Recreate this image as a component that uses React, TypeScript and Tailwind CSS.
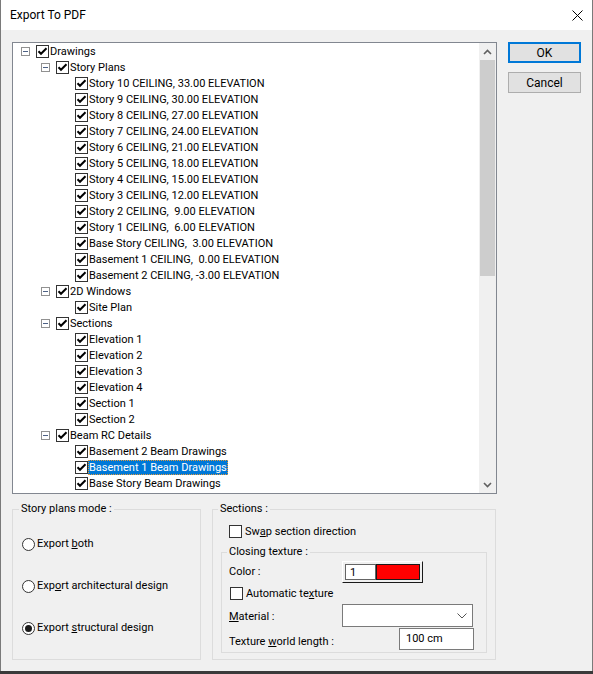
import { ReactNode } from 'react'

type Node = { label: string; level: number; expander?: boolean; selected?: boolean }

const storyLevels = [
  'Story 10 CEILING, 33.00 ELEVATION',
  'Story 9 CEILING, 30.00 ELEVATION',
  'Story 8 CEILING, 27.00 ELEVATION',
  'Story 7 CEILING, 24.00 ELEVATION',
  'Story 6 CEILING, 21.00 ELEVATION',
  'Story 5 CEILING, 18.00 ELEVATION',
  'Story 4 CEILING, 15.00 ELEVATION',
  'Story 3 CEILING, 12.00 ELEVATION',
  'Story 2 CEILING,  9.00 ELEVATION',
  'Story 1 CEILING,  6.00 ELEVATION',
  'Base Story CEILING,  3.00 ELEVATION',
  'Basement 1 CEILING,  0.00 ELEVATION',
  'Basement 2 CEILING, -3.00 ELEVATION',
]

const nodes: Node[] = [
  { label: 'Drawings', level: 0, expander: true },
  { label: 'Story Plans', level: 1, expander: true },
  ...storyLevels.map((label) => ({ label, level: 2 })),
  { label: '2D Windows', level: 1, expander: true },
  { label: 'Site Plan', level: 2 },
  { label: 'Sections', level: 1, expander: true },
  { label: 'Elevation 1', level: 2 },
  { label: 'Elevation 2', level: 2 },
  { label: 'Elevation 3', level: 2 },
  { label: 'Elevation 4', level: 2 },
  { label: 'Section 1', level: 2 },
  { label: 'Section 2', level: 2 },
  { label: 'Beam RC Details', level: 1, expander: true },
  { label: 'Basement 2 Beam Drawings', level: 2 },
  { label: 'Basement 1 Beam Drawings', level: 2, selected: true },
  { label: 'Base Story Beam Drawings', level: 2 },
]

const indent = ['ml-[8px]', 'ml-[28px]', 'ml-[47px]']

function CheckBox({ checked }: { checked?: boolean }) {
  return (
    <span className="w-[13px] h-[13px] shrink-0 border border-[#333] bg-white flex items-center justify-center">
      {checked && (
        <svg width="11" height="11" viewBox="0 0 11 11">
          <path d="M1.5 5.2 L4 7.8 L9.5 2.2" fill="none" stroke="#000" strokeWidth="2" />
        </svg>
      )}
    </span>
  )
}

function Expander() {
  return (
    <span className="w-[9px] h-[9px] border border-[#919191] bg-white flex items-center justify-center">
      <span className="w-[5px] h-px bg-[#4d6185]" />
    </span>
  )
}

function Radio({ checked }: { checked?: boolean }) {
  return (
    <span className="w-[13px] h-[13px] shrink-0 rounded-full border border-[#333] bg-white flex items-center justify-center">
      {checked && <span className="w-[7px] h-[7px] rounded-full bg-[#1a1a1a]" />}
    </span>
  )
}

function TreeRow({ node }: { node: Node }) {
  return (
    <div className={`h-[16px] flex items-center ${indent[node.level]}`}>
      <span className="w-[15px] h-[16px] flex items-center">{node.expander && <Expander />}</span>
      <CheckBox checked />
      <span
        className={`h-[15px] self-end leading-[16px] px-px whitespace-pre ${
          node.selected ? 'bg-[#0078d7] text-white outline-1 outline-dotted outline-[#e59b3a] -outline-offset-1' : ''
        }`}
      >
        {node.label}
      </span>
    </div>
  )
}

function Button({ children, primary }: { children: ReactNode; primary?: boolean }) {
  return (
    <button
      className={`w-[73px] h-[21px] bg-[#e1e1e1] text-[12px] leading-none ${
        primary ? 'border-2 border-[#0078d7]' : 'border border-[#adadad]'
      }`}
    >
      {children}
    </button>
  )
}

export default function App() {
  return (
    <div className="w-[593px] h-[674px] bg-[#3a3a3a] font-['Roboto',sans-serif] text-[11px] text-black">
      <div className="h-[671px] border-x border-[#7a7a7a] bg-[#f0f0f0] flex flex-col">
        {/* title bar */}
        <div className="h-[30px] bg-white flex items-center justify-between pl-[9px] pr-[9px] shrink-0">
          <span className="text-[12px]">Export To PDF</span>
          <svg width="11" height="11" viewBox="0 0 11 11">
            <path d="M0.5 0.5 L10.5 10.5 M10.5 0.5 L0.5 10.5" stroke="#000" strokeWidth="1" />
          </svg>
        </div>

        <div className="flex pl-[11px] pt-[12px]">
          {/* drawings tree */}
          <div className="w-[485px] h-[452px] border border-[#828790] bg-white flex">
            <div className="flex-1">
              {nodes.map((n, i) => (
                <TreeRow key={i} node={n} />
              ))}
            </div>
            <div className="w-[17px] bg-[#f0f0f0] flex flex-col">
              <div className="h-[17px] flex items-center justify-center">
                <svg width="9" height="6" viewBox="0 0 9 6">
                  <path d="M1 5 L4.5 1.5 L8 5" fill="none" stroke="#606060" strokeWidth="1.6" />
                </svg>
              </div>
              <div className="mx-px h-[216px] bg-[#cdcdcd]" />
              <div className="flex-1" />
              <div className="h-[17px] flex items-center justify-center">
                <svg width="9" height="6" viewBox="0 0 9 6">
                  <path d="M1 1 L4.5 4.5 L8 1" fill="none" stroke="#606060" strokeWidth="1.6" />
                </svg>
              </div>
            </div>
          </div>

          <div className="ml-[11px] flex flex-col gap-[9px]">
            <Button primary>OK</Button>
            <Button>Cancel</Button>
          </div>
        </div>

        <div className="flex pl-[11px] mt-[6px] gap-[11px]">
          {/* story plans mode */}
          <fieldset className="w-[189px] h-[160px] border border-[#dcdcdc] pl-[6px]">
            <legend className="px-[2px] leading-[18px]">Story plans mode :</legend>
            <div className="flex flex-col gap-[26px] mt-[18px] ml-[3px]">
              <label className="h-[16px] flex items-center gap-[2px]">
                <Radio />
                <span className="pt-px">
                  Export <u>b</u>oth
                </span>
              </label>
              <label className="h-[16px] flex items-center gap-[2px]">
                <Radio />
                <span className="pt-px">
                  Exp<u>o</u>rt architectural design
                </span>
              </label>
              <label className="h-[16px] flex items-center gap-[2px]">
                <Radio checked />
                <span className="pt-px">
                  Export <u>s</u>tructural design
                </span>
              </label>
            </div>
          </fieldset>

          {/* sections */}
          <fieldset className="w-[284px] h-[160px] border border-[#dcdcdc] pl-[5px] pr-[8px]">
            <legend className="px-[2px] leading-[18px]">Sections :</legend>
            <div className="pl-[3px]">
              <label className="h-[17px] mt-[5px] pl-[8px] flex items-center gap-[3px]">
                <CheckBox />
                <span className="pt-px">
                  Sw<u>a</u>p section direction
                </span>
              </label>

              <fieldset className="mt-[3px] border border-[#dcdcdc] px-[5px] pb-[2px]">
                <legend className="px-[2px] leading-[18px]">Closing texture :</legend>
                <div className="pl-[2px]">
                  <div className="h-[22px] flex items-center">
                    <span className="w-[113px] pt-px">Color :</span>
                    <div className="w-[81px] h-[22px] border border-t-white border-l-white border-b-[#1a1a1a] border-r-[#1a1a1a] bg-[#f0f0f0] p-[2px] flex">
                      <div className="w-[31px] border border-[#646464] bg-white pl-[4px] leading-[15px]">1</div>
                      <div className="flex-1 border border-[#1a1a1a] bg-[#ff0000]" />
                    </div>
                  </div>

                  <label className="h-[17px] mt-[2px] pl-px flex items-center gap-[3px]">
                    <CheckBox />
                    <span className="pt-px">
                      Automatic te<u>x</u>ture
                    </span>
                  </label>

                  <div className="h-[23px] mt-[2px] flex items-center">
                    <span className="w-[113px] pt-[4px]">
                      <u>M</u>aterial :
                    </span>
                    <div className="w-[131px] h-[23px] border border-[#7a7a7a] bg-white flex items-center justify-end pr-[5px]">
                      <svg width="10" height="6" viewBox="0 0 10 6">
                        <path d="M0.5 0.5 L5 5 L9.5 0.5" fill="none" stroke="#555" strokeWidth="1" />
                      </svg>
                    </div>
                  </div>

                  <div className="h-[22px] mt-px flex">
                    <span className="w-[170px] self-end leading-[16px]">
                      Texture <u>w</u>orld length :
                    </span>
                    <div className="w-[75px] h-[22px] border border-[#7a7a7a] bg-white pl-[6px] leading-[19px]">100 cm</div>
                  </div>
                </div>
              </fieldset>
            </div>
          </fieldset>
        </div>
      </div>
    </div>
  )
}
